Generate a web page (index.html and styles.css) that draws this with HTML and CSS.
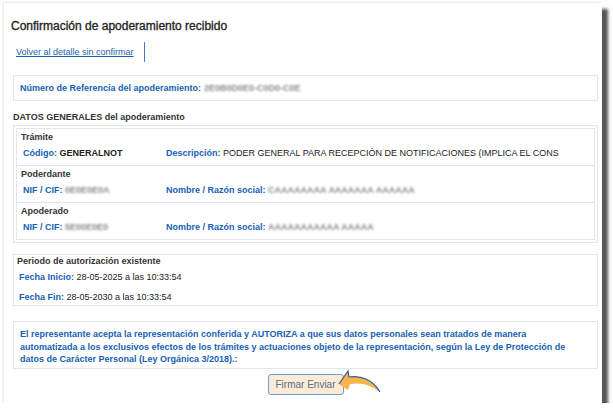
FILE: index.html
```html
<!DOCTYPE html>
<html lang="es">
<head>
  <meta charset="UTF-8">
  <title>Confirmación de apoderamiento recibido</title>
  <link rel="stylesheet" href="styles.css">
</head>
<body>
  <div class="panel">
    <h1 class="title">Confirmación de apoderamiento recibido</h1>

    <div class="back"><a href="#">Volver al detalle sin confirmar</a></div>

    <div class="box ref">
      <span class="lbl">Número de Referencia del apoderamiento:</span>
      <span class="hidden">2E0B0D0E0-C0D0-C0E</span>
    </div>

    <div class="section">DATOS GENERALES del apoderamiento</div>
    <div class="box datos">
      <div class="inner">
        <div class="row">
          <div class="head">Trámite</div>
          <div class="fields">
            <div class="col1"><span class="lbl">Código:</span> <b>GENERALNOT</b></div>
            <div class="col2"><span class="lbl">Descripción:</span> PODER GENERAL PARA RECEPCIÓN DE NOTIFICACIONES (IMPLICA EL CONS</div>
          </div>
        </div>
        <div class="row">
          <div class="head">Poderdante</div>
          <div class="fields">
            <div class="col1"><span class="lbl">NIF / CIF:</span> <span class="hidden">0E0E0E0A</span></div>
            <div class="col2"><span class="lbl">Nombre / Razón social:</span> <span class="hidden">CAAAAAAAA AAAAAAA AAAAAA</span></div>
          </div>
        </div>
        <div class="row">
          <div class="head">Apoderado</div>
          <div class="fields">
            <div class="col1"><span class="lbl">NIF / CIF:</span> <span class="hidden">5E00E0E0</span></div>
            <div class="col2"><span class="lbl">Nombre / Razón social:</span> <span class="hidden">AAAAAAAAAAA AAAAA</span></div>
          </div>
        </div>
      </div>
    </div>

    <div class="box periodo">
      <div class="head">Periodo de autorización existente</div>
      <div class="date"><span class="lbl">Fecha Inicio:</span> 28-05-2025 a las 10:33:54</div>
      <div class="date"><span class="lbl">Fecha Fin:</span> 28-05-2030 a las 10:33:54</div>
    </div>

    <div class="box legal">
      El representante acepta la representación conferida y AUTORIZA a que sus datos personales sean tratados de manera<br>
      automatizada a los exclusivos efectos de los trámites y actuaciones objeto de la representación, según la Ley de Protección de<br>
      datos de Carácter Personal (Ley Orgánica 3/2018).:
    </div>

    <div class="actions">
      <button class="btn">Firmar Enviar</button>
      <svg class="arrow" width="46" height="26" viewBox="0 0 46 26">
        <path d="M1,15 L10,2 L11,8 C23,6 35,11 42,23 C33,16 23,13 12,15 L10,21 Z" fill="#f7b54a"/>
        <path d="M1,15 L10,2 L11,8 C23,6 35,11 42,23" fill="none" stroke="#2d58a8" stroke-width="1.2"/>
      </svg>
    </div>
  </div>
</body>
</html>
```

FILE: styles.css
```css
body { margin: 0; background: #fff; font-family: "Liberation Sans", Arial, sans-serif; font-size: 9px; color: #222; }
.panel { margin: 3px 0 0 4px; width: 598px; height: 400px; box-sizing: border-box; padding: 0 4px 0 9px; background: #fff; box-shadow: 6px 6px 3px #555, -1px -1px 2px #e4e4e4; position: relative; }
.title { margin: 0 0 0 -2px; padding-top: 15px; font-size: 12px; font-weight: normal; color: #262626; -webkit-text-stroke: 0.35px #262626; line-height: 16px; }
.back { margin-top: 8px; height: 20px; display: flex; align-items: center; }
.back a { display: block; padding: 4px 10px 4px 3px; font-size: 9px; color: #1b5fae; border-right: 1px solid #3f7cc4; line-height: 12px; }
.box { border: 1px solid #e2e7ee; }
.lbl { color: #1761b3; font-weight: bold; }
.hidden { white-space: nowrap; color: #8a8a8a; filter: blur(1.2px); font-weight: bold; }
.ref { margin-top: 13px; height: 24px; display: flex; align-items: center; padding-left: 6px; gap: 3px; }
.section { margin-top: 10px; font-weight: bold; color: #333; line-height: 12px; }
.datos { margin-top: 2px; padding: 2px; }
.inner { border: 1px solid #e2e7ee; }
.row { border-top: 1px solid #dde4ee; padding: 2px 0 6px 4px; }
.row:first-child { border-top: none; }
.head { font-weight: bold; color: #333; line-height: 12px; }
.fields { display: flex; margin-top: 4px; line-height: 12px; padding-left: 2px; }
.col1 { width: 143px; }
.col2 { white-space: nowrap; }
.periodo { margin-top: 11px; height: 52px; padding: 0 0 0 3px; box-sizing: border-box; }
.date { margin-top: 4px; padding-left: 2px; line-height: 12px; }
.date + .date { margin-top: 8px; }
.legal { margin-top: 15px; height: 48px; box-sizing: border-box; padding: 6px 0 0 6px; font-weight: bold; color: #1761b3; line-height: 12.5px; }
.actions { margin-top: 5px; display: flex; justify-content: center; position: relative; }
.btn { width: 76px; height: 21px; padding: 0; font-family: inherit; font-size: 10px; color: #55708f; background: #fdebd3; border: 1px solid #6f9bd6; border-radius: 3px; }
.arrow { position: absolute; left: 325px; top: -5px; }
```
